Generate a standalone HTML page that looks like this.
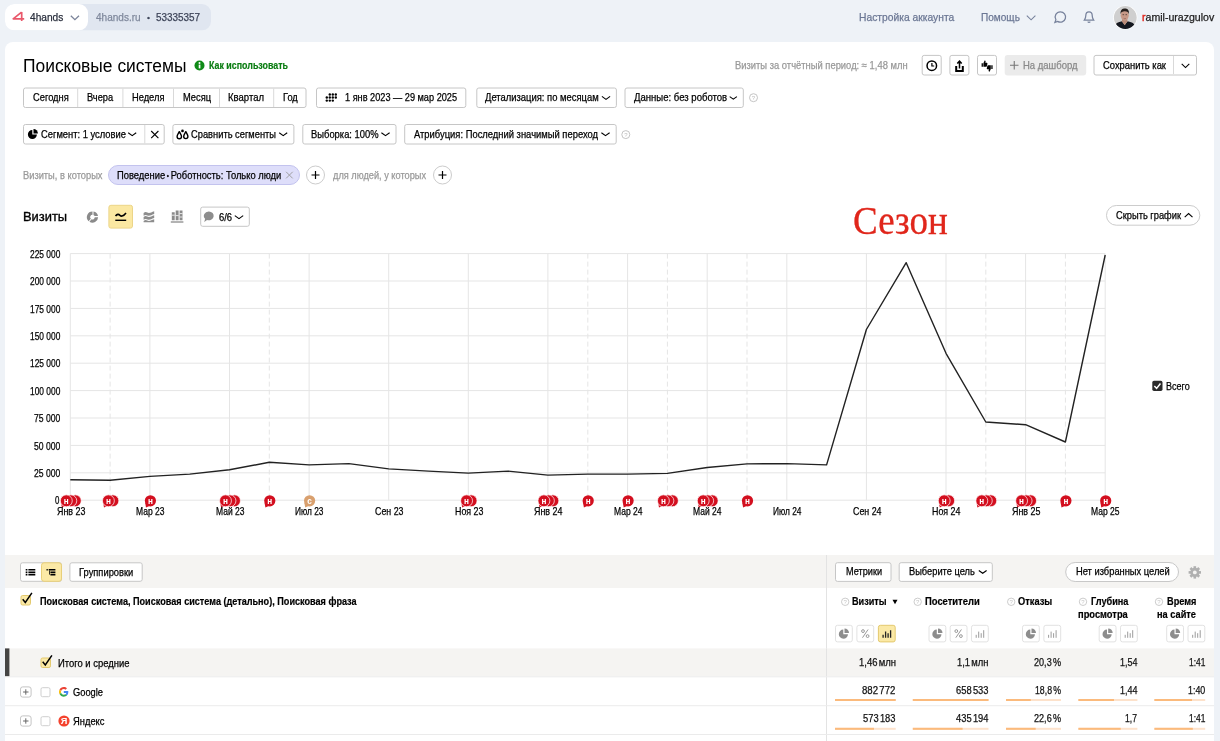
<!DOCTYPE html>
<html lang="ru">
<head>
<meta charset="utf-8">
<title>Поисковые системы — Яндекс Метрика</title>
<style>
html,body{margin:0;padding:0}
body{width:1220px;height:741px;overflow:hidden;background:#eef2f7;font-family:"Liberation Sans",sans-serif;position:relative}
.texts{position:absolute;left:0;top:0;width:1220px;height:741px;will-change:transform}
.t{position:absolute;white-space:pre;line-height:1;transform-origin:0 50%;display:block}
svg.gfx{position:absolute;left:0;top:0;will-change:transform}
</style>
</head>
<body>
<svg class="gfx" width="1220" height="741" viewBox="0 0 1220 741">
<rect x="5" y="4" width="206" height="26.3" rx="9" fill="#e0e6f0"/>
<rect x="5" y="4" width="83" height="26.3" rx="9" fill="#fff"/>
<svg x="12" y="11.5" overflow="visible" width="12.5" height="10" viewBox="0 0 12.5 10"><path d="M9.6 0.7 L1.2 7.3 H12.2 M9.7 0.4 V9.5" fill="none" stroke="#e9586b" stroke-width="1.7" stroke-linejoin="round"/></svg>
<svg x="70.3" y="15.2" overflow="visible" width="9.2" height="5" viewBox="0 0 9.2 5"><path d="M0.5 0.5 L4.6 4.4 L8.7 0.5" fill="none" stroke="#7b849a" stroke-width="1.3"/></svg>
<svg x="1026.3" y="15.2" overflow="visible" width="9.6" height="5.2" viewBox="0 0 9.6 5.2"><path d="M0.5 0.5 L4.8 4.6 L9.1 0.5" fill="none" stroke="#77829c" stroke-width="1.1"/></svg>
<svg x="1054" y="11" overflow="visible" width="12.5" height="12.5" viewBox="0 0 12.5 12.5"><path d="M6.4 0.8 A5.2 5.2 0 1 1 3.6 10.4 L0.9 11.4 L1.9 8.7 A5.2 5.2 0 0 1 6.4 0.8 Z" fill="none" stroke="#77829c" stroke-width="1.25"/></svg>
<svg x="1083.5" y="11" overflow="visible" width="11" height="12.5" viewBox="0 0 11 12.5"><path d="M5.5 0.8 C3.2 0.8 2.3 2.6 2.3 4.6 C2.3 7 1.6 7.9 0.8 9.2 H10.2 C9.4 7.9 8.7 7 8.7 4.6 C8.7 2.6 7.8 0.8 5.5 0.8 Z M4.2 10.6 Q5.5 12 6.8 10.6" fill="none" stroke="#77829c" stroke-width="1.25"/></svg>
<svg x="1113.2" y="5.4" overflow="visible" width="24.2" height="24.2" viewBox="0 0 24 24"><defs><clipPath id="av"><circle cx="12" cy="12" r="11.3"/></clipPath></defs><circle cx="12" cy="12" r="12" fill="#fff"/><g clip-path="url(#av)"><rect width="24" height="24" fill="#cfcfcf"/><path d="M0 24 C0.5 18.5 4 16.6 8.6 15.6 L11.4 19.5 L14.2 15.6 C19.5 16.6 22.5 18.5 23.5 24 Z" fill="#14171f"/><path d="M8.6 15.6 L11.4 19.6 L14.2 15.6 L13.8 13 H9 Z" fill="#b98a76"/><ellipse cx="11.4" cy="9.8" rx="4" ry="5.3" fill="#c79a88"/><path d="M7.3 8.8 C6.9 4.3 9.2 3.1 11.5 3.1 C13.900 3.100 16.100 4.300 15.600 8.800 C15.200 6.600 14 5.800 11.500 5.800 C9 5.800 7.800 6.600 7.300 8.800 Z" fill="#25201e"/><path d="M9.300 9.200 H10.800 M12.200 9.200 H13.700" stroke="#3a2a26" stroke-width="0.700"/><path d="M10.400 12.900 Q11.500 13.500 12.600 12.900" stroke="#8a5a50" stroke-width="0.600" fill="none"/></g></svg>
<rect x="5" y="42" width="1209" height="720" rx="8" fill="#fff"/>
<svg x="194.5" y="60.5" overflow="visible" width="10" height="10" viewBox="0 0 10 10"><circle cx="5" cy="5" r="5" fill="#0f8a17"/><rect x="4.2" y="4.1" width="1.7" height="3.8" fill="#fff"/><circle cx="5" cy="2.6" r="1" fill="#fff"/></svg>
<rect x="922.2" y="55.4" width="19" height="19.6" rx="2" fill="#fff" stroke="#c6c6c6"/>
<rect x="949.9" y="55.4" width="19" height="19.6" rx="2" fill="#fff" stroke="#c6c6c6"/>
<rect x="977.5" y="55.4" width="19" height="19.6" rx="2" fill="#fff" stroke="#c6c6c6"/>
<svg x="926.2" y="60.1" overflow="visible" width="11.2" height="11.2" viewBox="0 0 11.2 11.2"><circle cx="5.6" cy="5.6" r="4.75" fill="none" stroke="#000" stroke-width="1.5"/><path d="M5.7 2.9 V5.9 H8" fill="none" stroke="#000" stroke-width="1.2"/></svg>
<svg x="955.2" y="60.3" overflow="visible" width="8.6" height="11.8" viewBox="0 0 8.6 11.8"><path d="M4.3 8.2 V1.2 M2.1 3.3 L4.3 0.9 L6.5 3.3" fill="none" stroke="#000" stroke-width="1.5"/><path d="M1 5.6 V10.7 H7.6 V5.6" fill="none" stroke="#000" stroke-width="2"/></svg>
<svg x="981.4" y="60.2" overflow="visible" width="6.2" height="6.8" viewBox="0 0 6.2 6.8"><path d="M0.2 3 H1.5 V6.6 H0.2 Z M2 3 L3.2 0.2 Q4.5 0.2 4.2 1.6 L3.9 2.6 H5.5 Q6.3 2.8 6 3.700 L5.400 6.100 Q5.200 6.600 4.600 6.600 H2 Z" fill="#000"/></svg>
<svg x="986.6" y="65.1" overflow="visible" width="6.2" height="6.8" viewBox="0 0 6.2 6.8"><path d="M0.2 3 H1.5 V6.6 H0.2 Z M2 3 L3.2 0.2 Q4.5 0.2 4.2 1.6 L3.9 2.6 H5.5 Q6.3 2.8 6 3.700 L5.400 6.100 Q5.200 6.600 4.600 6.600 H2 Z" fill="#000" transform="rotate(180 3.1 3.4)"/></svg>
<rect x="1004.7" y="54.9" width="81.5" height="20.6" rx="3" fill="#ebebeb"/>
<svg x="1010" y="61" overflow="visible" width="8.5" height="8.5" viewBox="0 0 8.5 8.5"><path d="M4.25 0 V8.5 M0 4.25 H8.5" stroke="#777" stroke-width="1.1"/></svg>
<rect x="1094" y="55.4" width="102.5" height="19.6" rx="2" fill="#fff" stroke="#c6c6c6"/>
<rect x="1173" y="56" width="1" height="18" fill="#d9d9d9"/>
<svg x="1181.3" y="63.5" overflow="visible" width="8.4" height="4.8" viewBox="0 0 8.4 4.8"><path d="M0.4 0.4 L4.2 4.1 L8 0.4" fill="none" stroke="#000" stroke-width="1.1"/></svg>
<rect x="23.5" y="88" width="282.5" height="19.5" rx="2" fill="#fff" stroke="#c6c6c6"/>
<rect x="77.2" y="88.5" width="1" height="18.5" fill="#d9d9d9"/>
<rect x="122.4" y="88.5" width="1" height="18.5" fill="#d9d9d9"/>
<rect x="173" y="88.5" width="1" height="18.5" fill="#d9d9d9"/>
<rect x="219" y="88.5" width="1" height="18.5" fill="#d9d9d9"/>
<rect x="273.2" y="88.5" width="1" height="18.5" fill="#d9d9d9"/>
<rect x="316.5" y="88" width="149.3" height="19.5" rx="2" fill="#fff" stroke="#c6c6c6"/>
<svg x="325.5" y="93.2" overflow="visible" width="11.6" height="8.7" viewBox="0 0 11.6 8.7"><circle cx="4.3" cy="1.30" r="1.2" fill="#000"/><circle cx="7.3" cy="1.30" r="1.2" fill="#000"/><circle cx="10.3" cy="1.30" r="1.2" fill="#000"/><circle cx="1.3" cy="4.35" r="1.2" fill="#000"/><circle cx="4.3" cy="4.35" r="1.2" fill="#000"/><circle cx="7.3" cy="4.35" r="1.2" fill="#000"/><circle cx="10.3" cy="4.35" r="1.2" fill="#000"/><circle cx="1.3" cy="7.40" r="1.2" fill="#000"/><circle cx="4.3" cy="7.40" r="1.2" fill="#000"/><circle cx="7.3" cy="7.40" r="1.2" fill="#000"/></svg>
<rect x="476.8" y="88" width="139.6" height="19.5" rx="2" fill="#fff" stroke="#c6c6c6"/>
<svg x="601.5" y="96" overflow="visible" width="9.0" height="3.9" viewBox="0 0 9.0 3.9"><path d="M0.4 0.4 L4.50 3.37 L8.60 0.4" fill="none" stroke="#000" stroke-width="1.1"/></svg>
<rect x="625" y="88" width="118.3" height="19.5" rx="2" fill="#fff" stroke="#c6c6c6"/>
<svg x="729.3" y="96.2" overflow="visible" width="8.0" height="3.4" viewBox="0 0 8.0 3.4"><path d="M0.4 0.4 L4.00 2.94 L7.60 0.4" fill="none" stroke="#000" stroke-width="1.1"/></svg>
<svg x="749" y="93.2" overflow="visible" width="9.0" height="9.0" viewBox="0 0 9.0 9.0"><circle cx="4.5" cy="4.5" r="4.0" fill="none" stroke="#bdbdbd" stroke-width="0.9"/><text x="4.5" y="6.6" font-size="6" text-anchor="middle" fill="#bdbdbd" font-family="Liberation Sans, sans-serif">?</text></svg>
<rect x="23.5" y="124.5" width="140.7" height="19.5" rx="2" fill="#fff" stroke="#c6c6c6"/>
<rect x="144.3" y="125" width="1" height="18.5" fill="#d9d9d9"/>
<svg x="27.9" y="129" overflow="visible" width="10" height="10" viewBox="0 0 10 10"><path d="M4.4 1 A4.5 4.5 0 1 0 9 5.6 H4.4 Z" fill="#000"/><path d="M5.6 0 A4.4 4.4 0 0 1 10 4.4 H5.6 Z" fill="#000"/></svg>
<svg x="127.8" y="132.3" overflow="visible" width="8.8" height="3.8" viewBox="0 0 8.8 3.8"><path d="M0.4 0.4 L4.40 3.28 L8.40 0.4" fill="none" stroke="#000" stroke-width="1.1"/></svg>
<svg x="150.8" y="130.6" overflow="visible" width="8" height="8" viewBox="0 0 8 8"><path d="M0.4 0.4 L7.6 7.6 M7.6 0.4 L0.4 7.6" stroke="#000" stroke-width="1.1"/></svg>
<rect x="172.9" y="124.5" width="121" height="19.5" rx="2" fill="#fff" stroke="#c6c6c6"/>
<svg x="176.2" y="129.3" overflow="visible" width="12.6" height="10.4" viewBox="0 0 12.6 10.4"><path d="M3.1 2.4 C4.2 4.4 5.3 5.7 5.3 7.2 A2.2 2.2 0 0 1 0.9 7.2 C0.9 5.7 2 4.4 3.1 2.4 Z" fill="#fff" stroke="#000" stroke-width="1.4" stroke-linejoin="round"/><path d="M9.6 2.4 C10.7 4.4 11.7 5.700 11.7 7.2 A2.100 2.100 0 0 1 7.500 7.2 C7.500 5.700 8.500 4.400 9.600 2.400 Z" fill="#fff" stroke="#000" stroke-width="1.4" stroke-linejoin="round"/><circle cx="6.3" cy="1.6" r="1.35" fill="#000"/></svg>
<svg x="278.8" y="132.3" overflow="visible" width="8.8" height="3.8" viewBox="0 0 8.8 3.8"><path d="M0.4 0.4 L4.40 3.28 L8.40 0.4" fill="none" stroke="#000" stroke-width="1.1"/></svg>
<rect x="302.8" y="124.5" width="93.2" height="19.5" rx="2" fill="#fff" stroke="#c6c6c6"/>
<svg x="381" y="132.3" overflow="visible" width="9.0" height="3.9" viewBox="0 0 9.0 3.9"><path d="M0.4 0.4 L4.50 3.37 L8.60 0.4" fill="none" stroke="#000" stroke-width="1.1"/></svg>
<rect x="404.7" y="124.5" width="211.5" height="19.5" rx="2" fill="#fff" stroke="#c6c6c6"/>
<svg x="601" y="132.3" overflow="visible" width="9.0" height="3.9" viewBox="0 0 9.0 3.9"><path d="M0.4 0.4 L4.50 3.37 L8.60 0.4" fill="none" stroke="#000" stroke-width="1.1"/></svg>
<svg x="621.3" y="130.1" overflow="visible" width="9.0" height="9.0" viewBox="0 0 9.0 9.0"><circle cx="4.5" cy="4.5" r="4.0" fill="none" stroke="#bdbdbd" stroke-width="0.9"/><text x="4.5" y="6.6" font-size="6" text-anchor="middle" fill="#bdbdbd" font-family="Liberation Sans, sans-serif">?</text></svg>
<rect x="108.5" y="165.5" width="191" height="19" rx="9.5" fill="#dedefa" stroke="#c3c3ee"/>
<svg x="285.8" y="171.5" overflow="visible" width="7.2" height="7.2" viewBox="0 0 7.2 7.2"><path d="M0.3 0.3 L6.9 6.9 M6.9 0.3 L0.3 6.9" stroke="#999" stroke-width="0.9"/></svg>
<svg x="306" y="165.5" overflow="visible" width="19" height="19" viewBox="0 0 19 19"><circle cx="9.5" cy="9.5" r="9" fill="#fff" stroke="#ccc" stroke-width="1"/><path d="M9.5 5.5 V13.5 M5.5 9.5 H13.5" stroke="#000" stroke-width="1.2"/></svg>
<svg x="433" y="165.5" overflow="visible" width="19" height="19" viewBox="0 0 19 19"><circle cx="9.5" cy="9.5" r="9" fill="#fff" stroke="#ccc" stroke-width="1"/><path d="M9.5 5.5 V13.5 M5.5 9.5 H13.5" stroke="#000" stroke-width="1.2"/></svg>
<svg x="86.6" y="211.2" overflow="visible" width="11.8" height="11.800" viewBox="0 0 12 12"><path d="M6 0.300 A5.700 5.700 0 0 0 2 10.100 L4.300 7.700 A2.400 2.400 0 0 1 6 3.600 Z" fill="#8a8a8a"/><path d="M7 0.400 A5.700 5.700 0 0 1 11.600 5 H8.200 A2.400 2.400 0 0 0 7 3.800 Z" fill="#8a8a8a"/><path d="M11.700 6.200 A5.700 5.700 0 0 1 2.900 10.800 L5 8.300 A2.400 2.400 0 0 0 8.300 6.200 Z" fill="#8a8a8a"/></svg>
<rect x="108.9" y="205.3" width="23.6" height="22.8" rx="2" fill="#fbe8a2" stroke="#ecd588"/>
<svg x="115" y="211.5" overflow="visible" width="11.5" height="10" viewBox="0 0 11.5 10"><path d="M0.5 4.6 C2.2 2.4 3.6 2.4 5 3.9 C6.5 5.4 8.6 4.4 11 1.4" fill="none" stroke="#000" stroke-width="1.6"/><path d="M0.3 8.8 H11.2" stroke="#000" stroke-width="1.4"/></svg>
<svg x="143.6" y="211.3" overflow="visible" width="10.6" height="11" viewBox="0 0 10.6 11"><path d="M0 1.8 C2.4 -0.4 3.6 1.8 5.3 1.8 C7 1.8 8.2 0.6 10.6 0 V2.6 C8.2 3.2 7 4.4 5.3 4.4 C3.6 4.4 2.4 2.6 0 4.4 Z M0 5.8 C2.4 3.6 3.6 5.8 5.3 5.8 C7 5.8 8.2 4.6 10.6 4 V6.6 C8.2 7.2 7 8.4 5.3 8.4 C3.6 8.4 2.4 6.6 0 8.4 Z M0 9.6 C2.4 7.6 3.6 9.6 5.3 9.6 C7 9.6 8.2 8.6 10.6 8 V11 H0 Z" fill="#8d8d8d"/></svg>
<svg x="170.8" y="210.4" overflow="visible" width="12.6" height="12.4" viewBox="0 0 12.6 12.4"><path d="M1 1.800 H3.900 V9.800 H1 Z M4.900 0 H7.800 V9.800 H4.900 Z M8.800 0 H11.700 V9.800 H8.800 Z" fill="#8a8a8a"/><path d="M4.900 5.200 H7.800 M8.800 3.200 H11.700 M8.800 6.600 H11.700 M1 4.800 H3.900" stroke="#fff" stroke-width="0.800"/><path d="M0 11.600 H12.600" stroke="#8a8a8a" stroke-width="1.300"/></svg>
<rect x="200.7" y="207.1" width="48.6" height="19.2" rx="2" fill="#fff" stroke="#c6c6c6"/>
<svg x="203.4" y="211.2" overflow="visible" width="10.6" height="11.1" viewBox="0 0 10 10.5"><path d="M5.2 0.2 A4.6 4.2 0 1 1 3.4 8.3 L0.8 10.2 L1.6 7.2 A4.6 4.2 0 0 1 5.2 0.2 Z" fill="#8d8d8d"/></svg>
<svg x="234.4" y="215.2" overflow="visible" width="9.2" height="4.0" viewBox="0 0 9.2 4.0"><path d="M0.4 0.4 L4.60 3.46 L8.80 0.4" fill="none" stroke="#000" stroke-width="1.1"/></svg>
<rect x="1106.5" y="205.5" width="93.3" height="19.7" rx="9.8" fill="#fff" stroke="#ccc"/>
<svg x="1184.3" y="213" overflow="visible" width="8.6" height="4.6" viewBox="0 0 8.6 4.6"><path d="M0.4 4.2 L4.3 0.6 L8.2 4.2" fill="none" stroke="#000" stroke-width="1.1"/></svg>
<svg x="0" y="0" overflow="visible" width="1220" height="741" viewBox="0 0 1220 741"><path d="M70.3 500.2 H1105.2" stroke="#e5e5e5" stroke-width="1"/><path d="M70.3 472.8 H1105.2" stroke="#e5e5e5" stroke-width="1"/><path d="M70.3 445.4 H1105.2" stroke="#e5e5e5" stroke-width="1"/><path d="M70.3 418.0 H1105.2" stroke="#e5e5e5" stroke-width="1"/><path d="M70.3 390.6 H1105.2" stroke="#e5e5e5" stroke-width="1"/><path d="M70.3 363.2 H1105.2" stroke="#e5e5e5" stroke-width="1"/><path d="M70.3 335.8 H1105.2" stroke="#e5e5e5" stroke-width="1"/><path d="M70.3 308.4 H1105.2" stroke="#e5e5e5" stroke-width="1"/><path d="M70.3 281.0 H1105.2" stroke="#e5e5e5" stroke-width="1"/><path d="M70.3 253.6 H1105.2" stroke="#e5e5e5" stroke-width="1"/><path d="M70.3 253.6 V500.2" stroke="#e5e5e5" stroke-width="1"/><path d="M149.9 253.6 V500.2" stroke="#e5e5e5" stroke-width="1"/><path d="M229.5 253.6 V500.2" stroke="#e5e5e5" stroke-width="1"/><path d="M309.1 253.6 V500.2" stroke="#e5e5e5" stroke-width="1"/><path d="M388.7 253.6 V500.2" stroke="#e5e5e5" stroke-width="1"/><path d="M468.3 253.6 V500.2" stroke="#e5e5e5" stroke-width="1"/><path d="M547.9 253.6 V500.2" stroke="#e5e5e5" stroke-width="1"/><path d="M627.6 253.6 V500.2" stroke="#e5e5e5" stroke-width="1"/><path d="M707.2 253.6 V500.2" stroke="#e5e5e5" stroke-width="1"/><path d="M786.8 253.6 V500.2" stroke="#e5e5e5" stroke-width="1"/><path d="M866.4 253.6 V500.2" stroke="#e5e5e5" stroke-width="1"/><path d="M946.0 253.6 V500.2" stroke="#e5e5e5" stroke-width="1"/><path d="M1025.6 253.6 V500.2" stroke="#e5e5e5" stroke-width="1"/><path d="M1105.2 253.6 V500.2" stroke="#e5e5e5" stroke-width="1"/><path d="M110.1 253.6 V500.2" stroke="#e5e5e5" stroke-width="1" stroke-dasharray="5 3"/><path d="M269.3 253.6 V500.2" stroke="#e5e5e5" stroke-width="1" stroke-dasharray="5 3"/><path d="M587.8 253.6 V500.2" stroke="#e5e5e5" stroke-width="1" stroke-dasharray="5 3"/><path d="M667.4 253.6 V500.2" stroke="#e5e5e5" stroke-width="1" stroke-dasharray="5 3"/><path d="M747.0 253.6 V500.2" stroke="#e5e5e5" stroke-width="1" stroke-dasharray="5 3"/><path d="M985.8 253.6 V500.2" stroke="#e5e5e5" stroke-width="1" stroke-dasharray="5 3"/><path d="M1065.4 253.6 V500.2" stroke="#e5e5e5" stroke-width="1" stroke-dasharray="5 3"/><polyline points="70.3,479.7 110.1,480.3 149.9,476.4 189.7,474.1 229.5,469.8 269.3,462.3 309.1,464.9 348.9,463.6 388.7,468.9 428.5,471.1 468.3,473.1 508.1,471.1 547.9,475.1 587.8,474.1 627.6,474.1 667.4,473.4 707.2,467.5 747.0,463.9 786.8,463.6 826.6,464.9 866.4,329.5 906.2,262.7 946.0,353.3 985.8,422 1025.6,424.7 1065.4,442 1105.2,255" fill="none" stroke="#222" stroke-width="1.4" stroke-linejoin="round"/><circle cx="75.3" cy="500.8" r="5.949999999999999" fill="#d30f1f" stroke="#fff" stroke-width="0.7"/><circle cx="70.8" cy="500.8" r="5.949999999999999" fill="#d30f1f" stroke="#fff" stroke-width="0.7"/><path d="M61.0 502.40000000000003 L61.9 507.5 L65.3 506.1" fill="#d30f1f"/><circle cx="66.3" cy="500.8" r="5.949999999999999" fill="#d30f1f" stroke="#fff" stroke-width="0.7"/><text x="66.3" y="503.5" font-size="8.2" font-weight="700" text-anchor="middle" fill="#fff" font-family="Liberation Sans, sans-serif">н</text><circle cx="112.9" cy="500.8" r="5.949999999999999" fill="#d30f1f" stroke="#fff" stroke-width="0.7"/><path d="M103.1 502.40000000000003 L104.0 507.5 L107.4 506.1" fill="#d30f1f"/><circle cx="108.4" cy="500.8" r="5.949999999999999" fill="#d30f1f" stroke="#fff" stroke-width="0.7"/><text x="108.4" y="503.5" font-size="8.2" font-weight="700" text-anchor="middle" fill="#fff" font-family="Liberation Sans, sans-serif">н</text><path d="M145.1 502.40000000000003 L146.0 507.5 L149.4 506.1" fill="#d30f1f"/><circle cx="150.4" cy="500.8" r="5.6" fill="#d30f1f"/><text x="150.4" y="503.5" font-size="8.2" font-weight="700" text-anchor="middle" fill="#fff" font-family="Liberation Sans, sans-serif">н</text><circle cx="234.5" cy="500.8" r="5.949999999999999" fill="#d30f1f" stroke="#fff" stroke-width="0.7"/><circle cx="230.0" cy="500.8" r="5.949999999999999" fill="#d30f1f" stroke="#fff" stroke-width="0.7"/><path d="M220.2 502.40000000000003 L221.1 507.5 L224.5 506.1" fill="#d30f1f"/><circle cx="225.5" cy="500.8" r="5.949999999999999" fill="#d30f1f" stroke="#fff" stroke-width="0.7"/><text x="225.5" y="503.5" font-size="8.2" font-weight="700" text-anchor="middle" fill="#fff" font-family="Liberation Sans, sans-serif">н</text><path d="M264.5 502.40000000000003 L265.4 507.5 L268.8 506.1" fill="#d30f1f"/><circle cx="269.8" cy="500.8" r="5.6" fill="#d30f1f"/><text x="269.8" y="503.5" font-size="8.2" font-weight="700" text-anchor="middle" fill="#fff" font-family="Liberation Sans, sans-serif">н</text><circle cx="471.1" cy="500.8" r="5.949999999999999" fill="#d30f1f" stroke="#fff" stroke-width="0.7"/><path d="M461.3 502.40000000000003 L462.2 507.5 L465.6 506.1" fill="#d30f1f"/><circle cx="466.6" cy="500.8" r="5.949999999999999" fill="#d30f1f" stroke="#fff" stroke-width="0.7"/><text x="466.6" y="503.5" font-size="8.2" font-weight="700" text-anchor="middle" fill="#fff" font-family="Liberation Sans, sans-serif">н</text><circle cx="552.9" cy="500.8" r="5.949999999999999" fill="#d30f1f" stroke="#fff" stroke-width="0.7"/><circle cx="548.4" cy="500.8" r="5.949999999999999" fill="#d30f1f" stroke="#fff" stroke-width="0.7"/><path d="M538.6 502.40000000000003 L539.5 507.5 L542.9 506.1" fill="#d30f1f"/><circle cx="543.9" cy="500.8" r="5.949999999999999" fill="#d30f1f" stroke="#fff" stroke-width="0.7"/><text x="543.9" y="503.5" font-size="8.2" font-weight="700" text-anchor="middle" fill="#fff" font-family="Liberation Sans, sans-serif">н</text><path d="M583.0 502.40000000000003 L583.9 507.5 L587.2 506.1" fill="#d30f1f"/><circle cx="588.2" cy="500.8" r="5.6" fill="#d30f1f"/><text x="588.2" y="503.5" font-size="8.2" font-weight="700" text-anchor="middle" fill="#fff" font-family="Liberation Sans, sans-serif">н</text><path d="M622.8 502.40000000000003 L623.7 507.5 L627.1 506.1" fill="#d30f1f"/><circle cx="628.1" cy="500.8" r="5.6" fill="#d30f1f"/><text x="628.1" y="503.5" font-size="8.2" font-weight="700" text-anchor="middle" fill="#fff" font-family="Liberation Sans, sans-serif">н</text><circle cx="672.4" cy="500.8" r="5.949999999999999" fill="#d30f1f" stroke="#fff" stroke-width="0.7"/><circle cx="667.9" cy="500.8" r="5.949999999999999" fill="#d30f1f" stroke="#fff" stroke-width="0.7"/><path d="M658.1 502.40000000000003 L659.0 507.5 L662.4 506.1" fill="#d30f1f"/><circle cx="663.4" cy="500.8" r="5.949999999999999" fill="#d30f1f" stroke="#fff" stroke-width="0.7"/><text x="663.4" y="503.5" font-size="8.2" font-weight="700" text-anchor="middle" fill="#fff" font-family="Liberation Sans, sans-serif">н</text><circle cx="712.2" cy="500.8" r="5.949999999999999" fill="#d30f1f" stroke="#fff" stroke-width="0.7"/><circle cx="707.7" cy="500.8" r="5.949999999999999" fill="#d30f1f" stroke="#fff" stroke-width="0.7"/><path d="M697.9 502.40000000000003 L698.8 507.5 L702.2 506.1" fill="#d30f1f"/><circle cx="703.2" cy="500.8" r="5.949999999999999" fill="#d30f1f" stroke="#fff" stroke-width="0.7"/><text x="703.2" y="503.5" font-size="8.2" font-weight="700" text-anchor="middle" fill="#fff" font-family="Liberation Sans, sans-serif">н</text><path d="M742.2 502.40000000000003 L743.1 507.5 L746.5 506.1" fill="#d30f1f"/><circle cx="747.5" cy="500.8" r="5.6" fill="#d30f1f"/><text x="747.5" y="503.5" font-size="8.2" font-weight="700" text-anchor="middle" fill="#fff" font-family="Liberation Sans, sans-serif">н</text><circle cx="948.7" cy="500.8" r="5.949999999999999" fill="#d30f1f" stroke="#fff" stroke-width="0.7"/><path d="M938.9 502.40000000000003 L939.8 507.5 L943.2 506.1" fill="#d30f1f"/><circle cx="944.2" cy="500.8" r="5.949999999999999" fill="#d30f1f" stroke="#fff" stroke-width="0.7"/><text x="944.2" y="503.5" font-size="8.2" font-weight="700" text-anchor="middle" fill="#fff" font-family="Liberation Sans, sans-serif">н</text><circle cx="990.8" cy="500.8" r="5.949999999999999" fill="#d30f1f" stroke="#fff" stroke-width="0.7"/><circle cx="986.3" cy="500.8" r="5.949999999999999" fill="#d30f1f" stroke="#fff" stroke-width="0.7"/><path d="M976.5 502.40000000000003 L977.4 507.5 L980.8 506.1" fill="#d30f1f"/><circle cx="981.8" cy="500.8" r="5.949999999999999" fill="#d30f1f" stroke="#fff" stroke-width="0.7"/><text x="981.8" y="503.5" font-size="8.2" font-weight="700" text-anchor="middle" fill="#fff" font-family="Liberation Sans, sans-serif">н</text><circle cx="1030.6" cy="500.8" r="5.949999999999999" fill="#d30f1f" stroke="#fff" stroke-width="0.7"/><circle cx="1026.1" cy="500.8" r="5.949999999999999" fill="#d30f1f" stroke="#fff" stroke-width="0.7"/><path d="M1016.3 502.40000000000003 L1017.2 507.5 L1020.6 506.1" fill="#d30f1f"/><circle cx="1021.6" cy="500.8" r="5.949999999999999" fill="#d30f1f" stroke="#fff" stroke-width="0.7"/><text x="1021.6" y="503.5" font-size="8.2" font-weight="700" text-anchor="middle" fill="#fff" font-family="Liberation Sans, sans-serif">н</text><path d="M1060.6 502.40000000000003 L1061.5 507.5 L1064.9 506.1" fill="#d30f1f"/><circle cx="1065.9" cy="500.8" r="5.6" fill="#d30f1f"/><text x="1065.9" y="503.5" font-size="8.2" font-weight="700" text-anchor="middle" fill="#fff" font-family="Liberation Sans, sans-serif">н</text><path d="M1100.4 502.40000000000003 L1101.3 507.5 L1104.7 506.1" fill="#d30f1f"/><circle cx="1105.7" cy="500.8" r="5.6" fill="#d30f1f"/><text x="1105.7" y="503.5" font-size="8.2" font-weight="700" text-anchor="middle" fill="#fff" font-family="Liberation Sans, sans-serif">н</text><path d="M304.3 502.40000000000003 L305.2 507.5 L308.6 506.1" fill="#d9a06e"/><circle cx="309.6" cy="500.8" r="5.6" fill="#d9a06e"/><text x="309.6" y="503.5" font-size="8.2" font-weight="700" text-anchor="middle" fill="#fff" font-family="Liberation Sans, sans-serif">с</text></svg>
<svg x="1152.3" y="380.8" overflow="visible" width="10.2" height="10.2" viewBox="0 0 10 10"><rect x="0" y="0" width="10" height="10" rx="1.6" fill="#2b2b2b"/><path d="M2 5.2 L4.2 7.4 L8 2.6" fill="none" stroke="#fff" stroke-width="1.4"/></svg>
<rect x="5" y="555" width="1209" height="33" fill="#f5f4f2"/>
<rect x="826" y="555" width="1" height="190" fill="#e3e3e3"/>
<rect x="20.5" y="562.8" width="41" height="18.5" rx="2" fill="#fff" stroke="#c6c6c6"/>
<rect x="41.5" y="562.8" width="20" height="18.5" rx="2.5" fill="#fbe9a6" stroke="#e8cf78"/>
<svg x="25.7" y="569" overflow="visible" width="9.6" height="6.4" viewBox="0 0 9.6 6.4"><path d="M0 0.8 H1.7 M0 3.2 H1.7 M0 5.6 H1.7 M2.7 0.8 H9.6 M2.700 3.200 H9.600 M2.700 5.600 H9.600" stroke="#000" stroke-width="1.600"/></svg>
<svg x="46.5" y="569" overflow="visible" width="8.900" height="6.400" viewBox="0 0 8.900 6.400"><path d="M0 0.800 H1.300 M2.200 0.800 H8.900 M3.900 3.200 H8.900 M3.900 5.600 H8.900" stroke="#000" stroke-width="1.600"/><path d="M3 1.500 V5.600" stroke="#000" stroke-width="0.800"/></svg>
<rect x="69.9" y="562.8" width="72.3" height="18.5" rx="2" fill="#fff" stroke="#c6c6c6"/>
<rect x="835.5" y="562.7" width="55.5" height="18.7" rx="2" fill="#fff" stroke="#c6c6c6"/>
<rect x="899.2" y="562.7" width="93.1" height="18.7" rx="2" fill="#fff" stroke="#c6c6c6"/>
<svg x="978.4" y="570.1" overflow="visible" width="8.6" height="3.7" viewBox="0 0 8.6 3.7"><path d="M0.4 0.4 L4.30 3.20 L8.20 0.4" fill="none" stroke="#000" stroke-width="1.1"/></svg>
<rect x="1065.7" y="562.5" width="112.8" height="19" rx="9.5" fill="#fff" stroke="#c8c8c8"/>
<svg x="1188.6" y="566.2" overflow="visible" width="12.4" height="12.4" viewBox="-6.2 -6.2 12.4 12.4"><rect x="-1.3" y="-6.2" width="2.6" height="3" fill="#b0b0b0" transform="rotate(0)"/><rect x="-1.3" y="-6.2" width="2.6" height="3" fill="#b0b0b0" transform="rotate(45)"/><rect x="-1.3" y="-6.2" width="2.6" height="3" fill="#b0b0b0" transform="rotate(90)"/><rect x="-1.3" y="-6.2" width="2.6" height="3" fill="#b0b0b0" transform="rotate(135)"/><rect x="-1.3" y="-6.2" width="2.6" height="3" fill="#b0b0b0" transform="rotate(180)"/><rect x="-1.3" y="-6.2" width="2.6" height="3" fill="#b0b0b0" transform="rotate(225)"/><rect x="-1.3" y="-6.2" width="2.6" height="3" fill="#b0b0b0" transform="rotate(270)"/><rect x="-1.3" y="-6.2" width="2.6" height="3" fill="#b0b0b0" transform="rotate(315)"/><circle r="4.6" fill="#b0b0b0"/><circle r="1.9" fill="#f5f4f2"/></svg>
<svg x="20.5" y="592" overflow="visible" width="14" height="13.5" viewBox="0 0 14 13.5"><rect x="0.5" y="3.5" width="9.5" height="9.5" rx="1.6" fill="#fbe9a6" stroke="#e3c96e" stroke-width="1"/><path d="M2.2 7.2 L4.8 10.4 L11.4 0.8" fill="none" stroke="#000" stroke-width="1.5"/></svg>
<svg x="841" y="597.6" overflow="visible" width="8.4" height="8.4" viewBox="0 0 8.4 8.4"><circle cx="4.2" cy="4.2" r="3.7" fill="none" stroke="#c6c6c6" stroke-width="0.9"/><text x="4.2" y="6.300000000000001" font-size="6" text-anchor="middle" fill="#c6c6c6" font-family="Liberation Sans, sans-serif">?</text></svg>
<svg x="892.5" y="599.8" overflow="visible" width="5" height="4.4" viewBox="0 0 5 4.4"><path d="M0 0 H5 L2.5 4.4 Z" fill="#000"/></svg>
<svg x="913.5" y="597.6" overflow="visible" width="8.4" height="8.4" viewBox="0 0 8.4 8.4"><circle cx="4.2" cy="4.2" r="3.7" fill="none" stroke="#c6c6c6" stroke-width="0.9"/><text x="4.2" y="6.300000000000001" font-size="6" text-anchor="middle" fill="#c6c6c6" font-family="Liberation Sans, sans-serif">?</text></svg>
<svg x="1007" y="597.6" overflow="visible" width="8.4" height="8.4" viewBox="0 0 8.4 8.4"><circle cx="4.2" cy="4.2" r="3.7" fill="none" stroke="#c6c6c6" stroke-width="0.9"/><text x="4.2" y="6.300000000000001" font-size="6" text-anchor="middle" fill="#c6c6c6" font-family="Liberation Sans, sans-serif">?</text></svg>
<svg x="1078.8" y="597.6" overflow="visible" width="8.4" height="8.4" viewBox="0 0 8.4 8.4"><circle cx="4.2" cy="4.2" r="3.7" fill="none" stroke="#c6c6c6" stroke-width="0.9"/><text x="4.2" y="6.300000000000001" font-size="6" text-anchor="middle" fill="#c6c6c6" font-family="Liberation Sans, sans-serif">?</text></svg>
<svg x="1154.8" y="597.6" overflow="visible" width="8.4" height="8.4" viewBox="0 0 8.4 8.4"><circle cx="4.2" cy="4.2" r="3.7" fill="none" stroke="#c6c6c6" stroke-width="0.9"/><text x="4.2" y="6.300000000000001" font-size="6" text-anchor="middle" fill="#c6c6c6" font-family="Liberation Sans, sans-serif">?</text></svg>
<rect x="835.5" y="625.3" width="16.8" height="16.6" rx="2" fill="#fff" stroke="#e2e2e2"/><svg x="838.8" y="628.5" overflow="visible" width="10.2" height="10.2" viewBox="0 0 10 10"><path d="M4.4 1 A4.5 4.5 0 1 0 9 5.6 H4.4 Z" fill="#8d8d8d"/><path d="M5.6 0 A4.4 4.4 0 0 1 10 4.4 H5.6 Z" fill="#8d8d8d"/></svg><rect x="856.9" y="625.3" width="16.8" height="16.6" rx="2" fill="#fff" stroke="#e2e2e2"/><svg x="861.1" y="629.1" overflow="visible" width="8.4" height="9" viewBox="0 0 8.4 9"><circle cx="1.9" cy="2" r="1.4" fill="none" stroke="#8d8d8d" stroke-width="0.9"/><circle cx="6.5" cy="7" r="1.4" fill="none" stroke="#8d8d8d" stroke-width="0.9"/><path d="M7 0.4 L1.4 8.6" stroke="#8d8d8d" stroke-width="0.9"/></svg><rect x="878.4" y="625.3" width="16.8" height="16.6" rx="2" fill="#fbe9a6" stroke="#e3c96e"/><svg x="882.3" y="629.8" overflow="visible" width="9" height="8" viewBox="0 0 9 8"><path d="M0.8 8 V5 M3.3 8 V1.8 M5.8 8 V3.4 M8.3 8 V0.4" stroke="#222" stroke-width="1.3"/></svg>
<rect x="929" y="625.3" width="16.8" height="16.6" rx="2" fill="#fff" stroke="#e2e2e2"/><svg x="932.3" y="628.5" overflow="visible" width="10.2" height="10.2" viewBox="0 0 10 10"><path d="M4.4 1 A4.5 4.5 0 1 0 9 5.6 H4.4 Z" fill="#8d8d8d"/><path d="M5.6 0 A4.4 4.4 0 0 1 10 4.4 H5.6 Z" fill="#8d8d8d"/></svg><rect x="950.2" y="625.3" width="16.8" height="16.6" rx="2" fill="#fff" stroke="#e2e2e2"/><svg x="954.4" y="629.1" overflow="visible" width="8.4" height="9" viewBox="0 0 8.4 9"><circle cx="1.9" cy="2" r="1.4" fill="none" stroke="#8d8d8d" stroke-width="0.9"/><circle cx="6.5" cy="7" r="1.4" fill="none" stroke="#8d8d8d" stroke-width="0.9"/><path d="M7 0.4 L1.4 8.6" stroke="#8d8d8d" stroke-width="0.9"/></svg><rect x="971.5" y="625.3" width="16.8" height="16.6" rx="2" fill="#fff" stroke="#e2e2e2"/><svg x="975.4" y="629.8" overflow="visible" width="9" height="8" viewBox="0 0 9 8"><path d="M0.8 8 V5 M3.3 8 V1.8 M5.8 8 V3.4 M8.3 8 V0.4" stroke="#9c9c9c" stroke-width="1"/></svg>
<rect x="1022.5" y="625.3" width="16.8" height="16.6" rx="2" fill="#fff" stroke="#e2e2e2"/><svg x="1025.8" y="628.5" overflow="visible" width="10.2" height="10.2" viewBox="0 0 10 10"><path d="M4.4 1 A4.5 4.5 0 1 0 9 5.6 H4.4 Z" fill="#8d8d8d"/><path d="M5.6 0 A4.4 4.4 0 0 1 10 4.4 H5.6 Z" fill="#8d8d8d"/></svg><rect x="1043.9" y="625.3" width="16.8" height="16.6" rx="2" fill="#fff" stroke="#e2e2e2"/><svg x="1047.8" y="629.8" overflow="visible" width="9" height="8" viewBox="0 0 9 8"><path d="M0.8 8 V5 M3.3 8 V1.8 M5.8 8 V3.4 M8.3 8 V0.4" stroke="#9c9c9c" stroke-width="1"/></svg>
<rect x="1099.2" y="625.3" width="16.8" height="16.6" rx="2" fill="#fff" stroke="#e2e2e2"/><svg x="1102.5" y="628.5" overflow="visible" width="10.2" height="10.2" viewBox="0 0 10 10"><path d="M4.4 1 A4.5 4.5 0 1 0 9 5.6 H4.4 Z" fill="#8d8d8d"/><path d="M5.6 0 A4.4 4.4 0 0 1 10 4.4 H5.6 Z" fill="#8d8d8d"/></svg><rect x="1120.5" y="625.3" width="16.8" height="16.6" rx="2" fill="#fff" stroke="#e2e2e2"/><svg x="1124.4" y="629.8" overflow="visible" width="9" height="8" viewBox="0 0 9 8"><path d="M0.8 8 V5 M3.3 8 V1.8 M5.8 8 V3.4 M8.3 8 V0.4" stroke="#9c9c9c" stroke-width="1"/></svg>
<rect x="1166.7" y="625.3" width="16.8" height="16.6" rx="2" fill="#fff" stroke="#e2e2e2"/><svg x="1170" y="628.5" overflow="visible" width="10.2" height="10.2" viewBox="0 0 10 10"><path d="M4.4 1 A4.5 4.5 0 1 0 9 5.6 H4.4 Z" fill="#8d8d8d"/><path d="M5.6 0 A4.4 4.4 0 0 1 10 4.4 H5.6 Z" fill="#8d8d8d"/></svg><rect x="1188" y="625.3" width="16.8" height="16.6" rx="2" fill="#fff" stroke="#e2e2e2"/><svg x="1191.9" y="629.8" overflow="visible" width="9" height="8" viewBox="0 0 9 8"><path d="M0.8 8 V5 M3.3 8 V1.8 M5.8 8 V3.4 M8.3 8 V0.4" stroke="#9c9c9c" stroke-width="1"/></svg>
<rect x="5" y="648.4" width="1209" height="28" fill="#f5f4f2"/>
<rect x="826" y="648.4" width="1" height="28" fill="#e3e3e3"/>
<rect x="5" y="648.4" width="4.4" height="28" fill="#444"/>
<rect x="5" y="676.3" width="1209" height="1" fill="#ebebeb"/>
<rect x="5" y="705.2" width="1209" height="1" fill="#ebebeb"/>
<rect x="5" y="734" width="1209" height="1" fill="#ebebeb"/>
<svg x="40.5" y="654.5" overflow="visible" width="14" height="13.5" viewBox="0 0 14 13.5"><rect x="0.5" y="3.5" width="9.5" height="9.5" rx="1.6" fill="#fbe9a6" stroke="#e3c96e" stroke-width="1"/><path d="M2.2 7.2 L4.8 10.4 L11.4 0.8" fill="none" stroke="#000" stroke-width="1.5"/></svg>
<svg x="20" y="686.4" overflow="visible" width="11.6" height="11.2" viewBox="0 0 11.6 11.2"><rect x="0.5" y="0.5" width="10.6" height="10.2" rx="2.2" fill="#fff" stroke="#c4c4c4"/><path d="M5.8 2.9 V8.3 M3.1 5.6 H8.5" stroke="#666" stroke-width="1"/></svg><rect x="41" y="687.7" width="9" height="9" rx="1.5" fill="#fff" stroke="#cfcfcf"/>
<svg x="59" y="687" overflow="visible" width="9.6" height="9.8" viewBox="0 0 48 48"><path fill="#EA4335" d="M24 9.5c3.5 0 6.6 1.2 9.1 3.6l6.8-6.8C35.8 2.4 30.3 0 24 0 14.6 0 6.5 5.4 2.6 13.2l7.9 6.2C12.400 13.700 17.700 9.500 24 9.500z"/><path fill="#4285F4" d="M46.500 24.500c0-1.600-.1-3.100-.4-4.500H24v9h12.700c-.6 3-2.300 5.500-4.800 7.200l7.700 6c4.500-4.200 6.900-10.300 6.900-17.700z"/><path fill="#FBBC05" d="M10.500 28.600c-.5-1.400-.8-3-.8-4.600s.3-3.200.8-4.600l-7.900-6.200C.9 16.500 0 20.100 0 24s.9 7.500 2.600 10.800l7.900-6.200z"/><path fill="#34A853" d="M24 48c6.500 0 11.900-2.100 15.900-5.800l-7.700-6c-2.100 1.400-4.900 2.300-8.200 2.300-6.300 0-11.600-4.200-13.500-9.900l-7.900 6.200C6.500 42.600 14.600 48 24 48z"/></svg>
<svg x="20" y="715.4" overflow="visible" width="11.6" height="11.2" viewBox="0 0 11.6 11.2"><rect x="0.5" y="0.5" width="10.6" height="10.2" rx="2.2" fill="#fff" stroke="#c4c4c4"/><path d="M5.8 2.9 V8.3 M3.1 5.6 H8.5" stroke="#666" stroke-width="1"/></svg><rect x="41" y="716.7" width="9" height="9" rx="1.5" fill="#fff" stroke="#cfcfcf"/>
<svg x="58.5" y="715.5" overflow="visible" width="11" height="11" viewBox="0 0 11 11"><circle cx="5.500" cy="5.500" r="5.600" fill="#f4432e"/><text x="5.500" y="8.800" font-size="9.2" font-weight="700" text-anchor="middle" fill="#fff" font-family="Liberation Sans, sans-serif">Я</text></svg>
<rect x="835" y="699" width="60.7" height="2" fill="#fde2cb"/>
<rect x="835" y="699" width="60.7" height="2" fill="#fbba7c"/>
<rect x="912.8" y="699" width="75.7" height="2" fill="#fde2cb"/>
<rect x="912.8" y="699" width="75.7" height="2" fill="#fbba7c"/>
<rect x="1006" y="699" width="55" height="2" fill="#fde2cb"/>
<rect x="1006" y="699" width="24.8" height="2" fill="#fbba7c"/>
<rect x="1078.4" y="699" width="59" height="2" fill="#fde2cb"/>
<rect x="1078.4" y="699" width="35.6" height="2" fill="#fbba7c"/>
<rect x="1154.4" y="699" width="50.8" height="2" fill="#fde2cb"/>
<rect x="1154.4" y="699" width="37.6" height="2" fill="#fbba7c"/>
<rect x="835" y="727.8" width="60.7" height="2" fill="#fde2cb"/>
<rect x="835" y="727.8" width="39" height="2" fill="#fbba7c"/>
<rect x="912.8" y="727.8" width="75.7" height="2" fill="#fde2cb"/>
<rect x="912.8" y="727.8" width="49.8" height="2" fill="#fbba7c"/>
<rect x="1006" y="727.8" width="55" height="2" fill="#fde2cb"/>
<rect x="1006" y="727.8" width="29.7" height="2" fill="#fbba7c"/>
<rect x="1078.4" y="727.8" width="59" height="2" fill="#fde2cb"/>
<rect x="1078.4" y="727.8" width="42.3" height="2" fill="#fbba7c"/>
<rect x="1154.4" y="727.8" width="50.8" height="2" fill="#fde2cb"/>
<rect x="1154.4" y="727.8" width="38.4" height="2" fill="#fbba7c"/>
</svg>
<div class="texts">
<span class="t" style="left:29.8px;top:11.8px;font-size:11px;color:#2a2f3d;-webkit-text-stroke:0.25px;transform:scaleX(0.923)">4hands</span>
<span class="t" style="left:95.6px;top:11.8px;font-size:11px;color:#7f889c;-webkit-text-stroke:0.25px;transform:scaleX(0.913)">4hands.ru</span>
<span class="t" style="left:146.5px;top:13.8px;font-size:8px;color:#3d4458;-webkit-text-stroke:0.25px;transform:scaleX(1.067)">•</span>
<span class="t" style="left:155.5px;top:11.8px;font-size:11px;color:#3d4458;-webkit-text-stroke:0.25px;transform:scaleX(0.901)">53335357</span>
<span class="t" style="left:858.7px;top:11.8px;font-size:11px;color:#6b7794;-webkit-text-stroke:0.25px;transform:scaleX(0.936)">Настройка аккаунта</span>
<span class="t" style="left:980.8px;top:11.8px;font-size:11px;color:#6b7794;-webkit-text-stroke:0.25px;transform:scaleX(0.915)">Помощь</span>
<span class="t" style="left:1141.5px;top:11.8px;font-size:11px;color:#1c1c1c;-webkit-text-stroke:0.25px;transform:scaleX(0.961)"><span style="color:#e1251b;-webkit-text-stroke:0.4px #e1251b">r</span>amil-urazgulov</span>
<span class="t" style="left:23.0px;top:57.3px;font-size:18px;transform:scaleX(0.967)">Поисковые системы</span>
<span class="t" style="left:208.5px;top:60.3px;font-size:10.5px;font-weight:700;color:#0b7d12;-webkit-text-stroke:0.2px;transform:scaleX(0.844)">Как использовать</span>
<span class="t" style="left:735.0px;top:59.8px;font-size:10.5px;color:#999;-webkit-text-stroke:0.25px;transform:scaleX(0.894)">Визиты за отчётный период: ≈ 1,48 млн</span>
<span class="t" style="left:1022.5px;top:59.8px;font-size:10.5px;color:#8a8a8a;-webkit-text-stroke:0.25px;transform:scaleX(0.904)">На дашборд</span>
<span class="t" style="left:1102.5px;top:59.8px;font-size:10.5px;-webkit-text-stroke:0.25px;transform:scaleX(0.895)">Сохранить как</span>
<span class="t" style="left:32.5px;top:92.3px;font-size:10.5px;-webkit-text-stroke:0.25px;transform:scaleX(0.889)">Сегодня</span>
<span class="t" style="left:86.5px;top:92.3px;font-size:10.5px;-webkit-text-stroke:0.25px;transform:scaleX(0.880)">Вчера</span>
<span class="t" style="left:131.5px;top:92.3px;font-size:10.5px;-webkit-text-stroke:0.25px;transform:scaleX(0.885)">Неделя</span>
<span class="t" style="left:182.5px;top:92.3px;font-size:10.5px;-webkit-text-stroke:0.25px;transform:scaleX(0.885)">Месяц</span>
<span class="t" style="left:228.3px;top:92.3px;font-size:10.5px;-webkit-text-stroke:0.25px;transform:scaleX(0.907)">Квартал</span>
<span class="t" style="left:282.6px;top:92.3px;font-size:10.5px;-webkit-text-stroke:0.25px;transform:scaleX(0.884)">Год</span>
<span class="t" style="left:344.6px;top:92.3px;font-size:10.5px;-webkit-text-stroke:0.25px;transform:scaleX(0.874)">1 янв 2023 — 29 мар 2025</span>
<span class="t" style="left:485.4px;top:92.3px;font-size:10.5px;-webkit-text-stroke:0.25px;transform:scaleX(0.897)">Детализация: по месяцам</span>
<span class="t" style="left:633.6px;top:92.3px;font-size:10.5px;-webkit-text-stroke:0.25px;transform:scaleX(0.910)">Данные: без роботов</span>
<span class="t" style="left:41.0px;top:128.7px;font-size:10.5px;-webkit-text-stroke:0.25px;transform:scaleX(0.892)">Сегмент: 1 условие</span>
<span class="t" style="left:191.3px;top:128.7px;font-size:10.5px;-webkit-text-stroke:0.25px;transform:scaleX(0.887)">Сравнить сегменты</span>
<span class="t" style="left:311.0px;top:128.7px;font-size:10.5px;-webkit-text-stroke:0.25px;transform:scaleX(0.894)">Выборка: 100%</span>
<span class="t" style="left:414.0px;top:128.7px;font-size:10.5px;-webkit-text-stroke:0.25px;transform:scaleX(0.895)">Атрибуция: Последний значимый переход</span>
<span class="t" style="left:23.0px;top:169.8px;font-size:10.5px;color:#999;-webkit-text-stroke:0.25px;transform:scaleX(0.886)">Визиты, в которых</span>
<span class="t" style="left:117.0px;top:169.8px;font-size:10.5px;-webkit-text-stroke:0.25px;transform:scaleX(0.892)">Поведение<span style="font-size:7px;vertical-align:1px"> • </span>Роботность: Только люди</span>
<span class="t" style="left:332.5px;top:169.8px;font-size:10.5px;color:#999;-webkit-text-stroke:0.25px;transform:scaleX(0.878)">для людей, у которых</span>
<span class="t" style="left:23.3px;top:210.3px;font-size:13px;-webkit-text-stroke:0.35px;transform:scaleX(0.992)">Визиты</span>
<span class="t" style="left:218.6px;top:211.7px;font-size:10.5px;-webkit-text-stroke:0.25px;transform:scaleX(0.897)">6/6</span>
<span class="t" style="left:853.3px;top:200.8px;font-size:40px;font-family:'Liberation Serif', serif;color:#e0261b;-webkit-text-stroke:0.3px;transform:scaleX(0.925)">Сезон</span>
<span class="t" style="left:1116.0px;top:209.8px;font-size:10.5px;-webkit-text-stroke:0.25px;transform:scaleX(0.886)">Скрыть график</span>
<span class="t" style="left:55.4px;top:495.4px;font-size:10.5px;-webkit-text-stroke:0.25px;transform:scaleX(0.753)">0</span>
<span class="t" style="left:33.5px;top:468.1px;font-size:10.5px;-webkit-text-stroke:0.25px;transform:scaleX(0.819)">25 000</span>
<span class="t" style="left:33.5px;top:440.6px;font-size:10.5px;-webkit-text-stroke:0.25px;transform:scaleX(0.819)">50 000</span>
<span class="t" style="left:33.5px;top:413.2px;font-size:10.5px;-webkit-text-stroke:0.25px;transform:scaleX(0.819)">75 000</span>
<span class="t" style="left:29.5px;top:385.9px;font-size:10.5px;-webkit-text-stroke:0.25px;transform:scaleX(0.798)">100 000</span>
<span class="t" style="left:29.5px;top:358.4px;font-size:10.5px;-webkit-text-stroke:0.25px;transform:scaleX(0.798)">125 000</span>
<span class="t" style="left:29.5px;top:331.1px;font-size:10.5px;-webkit-text-stroke:0.25px;transform:scaleX(0.798)">150 000</span>
<span class="t" style="left:29.5px;top:303.6px;font-size:10.5px;-webkit-text-stroke:0.25px;transform:scaleX(0.798)">175 000</span>
<span class="t" style="left:29.5px;top:276.2px;font-size:10.5px;-webkit-text-stroke:0.25px;transform:scaleX(0.798)">200 000</span>
<span class="t" style="left:29.5px;top:248.8px;font-size:10.5px;-webkit-text-stroke:0.25px;transform:scaleX(0.798)">225 000</span>
<span class="t" style="left:56.5px;top:505.9px;font-size:10.5px;-webkit-text-stroke:0.25px;transform:scaleX(0.849)">Янв 23</span>
<span class="t" style="left:136.1px;top:505.9px;font-size:10.5px;-webkit-text-stroke:0.25px;transform:scaleX(0.811)">Мар 23</span>
<span class="t" style="left:215.7px;top:505.9px;font-size:10.5px;-webkit-text-stroke:0.25px;transform:scaleX(0.810)">Май 23</span>
<span class="t" style="left:295.3px;top:505.9px;font-size:10.5px;-webkit-text-stroke:0.25px;transform:scaleX(0.793)">Июл 23</span>
<span class="t" style="left:374.9px;top:505.9px;font-size:10.5px;-webkit-text-stroke:0.25px;transform:scaleX(0.842)">Сен 23</span>
<span class="t" style="left:454.5px;top:505.9px;font-size:10.5px;-webkit-text-stroke:0.25px;transform:scaleX(0.845)">Ноя 23</span>
<span class="t" style="left:534.1px;top:505.9px;font-size:10.5px;-webkit-text-stroke:0.25px;transform:scaleX(0.849)">Янв 24</span>
<span class="t" style="left:613.8px;top:505.9px;font-size:10.5px;-webkit-text-stroke:0.25px;transform:scaleX(0.811)">Мар 24</span>
<span class="t" style="left:693.4px;top:505.9px;font-size:10.5px;-webkit-text-stroke:0.25px;transform:scaleX(0.810)">Май 24</span>
<span class="t" style="left:773.0px;top:505.9px;font-size:10.5px;-webkit-text-stroke:0.25px;transform:scaleX(0.793)">Июл 24</span>
<span class="t" style="left:852.6px;top:505.9px;font-size:10.5px;-webkit-text-stroke:0.25px;transform:scaleX(0.842)">Сен 24</span>
<span class="t" style="left:932.2px;top:505.9px;font-size:10.5px;-webkit-text-stroke:0.25px;transform:scaleX(0.845)">Ноя 24</span>
<span class="t" style="left:1011.8px;top:505.9px;font-size:10.5px;-webkit-text-stroke:0.25px;transform:scaleX(0.849)">Янв 25</span>
<span class="t" style="left:1091.4px;top:505.9px;font-size:10.5px;-webkit-text-stroke:0.25px;transform:scaleX(0.811)">Мар 25</span>
<span class="t" style="left:1166.3px;top:380.6px;font-size:10.5px;-webkit-text-stroke:0.25px;transform:scaleX(0.860)">Всего</span>
<span class="t" style="left:79.0px;top:566.8px;font-size:10.5px;-webkit-text-stroke:0.25px;transform:scaleX(0.890)">Группировки</span>
<span class="t" style="left:845.6px;top:566.4px;font-size:10.5px;-webkit-text-stroke:0.25px;transform:scaleX(0.871)">Метрики</span>
<span class="t" style="left:909.0px;top:566.4px;font-size:10.5px;-webkit-text-stroke:0.25px;transform:scaleX(0.884)">Выберите цель</span>
<span class="t" style="left:1075.7px;top:566.4px;font-size:10.5px;-webkit-text-stroke:0.25px;transform:scaleX(0.888)">Нет избранных целей</span>
<span class="t" style="left:39.5px;top:596.2px;font-size:10.5px;font-weight:700;-webkit-text-stroke:0.2px;transform:scaleX(0.867)">Поисковая система, Поисковая система (детально), Поисковая фраза</span>
<span class="t" style="left:852.0px;top:596.4px;font-size:10.5px;font-weight:700;-webkit-text-stroke:0.2px;transform:scaleX(0.869)">Визиты</span>
<span class="t" style="left:925.0px;top:596.4px;font-size:10.5px;font-weight:700;-webkit-text-stroke:0.2px;transform:scaleX(0.896)">Посетители</span>
<span class="t" style="left:1018.2px;top:596.4px;font-size:10.5px;font-weight:700;-webkit-text-stroke:0.2px;transform:scaleX(0.883)">Отказы</span>
<span class="t" style="left:1090.5px;top:596.4px;font-size:10.5px;font-weight:700;-webkit-text-stroke:0.2px;transform:scaleX(0.873)">Глубина</span>
<span class="t" style="left:1078.4px;top:608.8px;font-size:10.5px;font-weight:700;-webkit-text-stroke:0.2px;transform:scaleX(0.888)">просмотра</span>
<span class="t" style="left:1166.6px;top:596.4px;font-size:10.5px;font-weight:700;-webkit-text-stroke:0.2px;transform:scaleX(0.875)">Время</span>
<span class="t" style="left:1157.0px;top:608.8px;font-size:10.5px;font-weight:700;-webkit-text-stroke:0.2px;transform:scaleX(0.879)">на сайте</span>
<span class="t" style="left:58.0px;top:657.8px;font-size:10.5px;-webkit-text-stroke:0.25px;transform:scaleX(0.899)">Итого и средние</span>
<span class="t" style="left:73.0px;top:686.8px;font-size:10.5px;-webkit-text-stroke:0.25px;transform:scaleX(0.886)">Google</span>
<span class="t" style="left:73.0px;top:715.8px;font-size:10.5px;-webkit-text-stroke:0.25px;transform:scaleX(0.892)">Яндекс</span>
<span class="t" style="left:858.7px;top:657.4px;font-size:10.5px;color:#111;-webkit-text-stroke:0.25px;transform:scaleX(0.902)">1,46<span style="letter-spacing:-1.5px"> </span>млн</span>
<span class="t" style="left:957.0px;top:657.4px;font-size:10.5px;color:#111;-webkit-text-stroke:0.25px;transform:scaleX(0.895)">1,1<span style="letter-spacing:-1.5px"> </span>млн</span>
<span class="t" style="left:1034.0px;top:657.4px;font-size:10.5px;color:#111;-webkit-text-stroke:0.25px;transform:scaleX(0.865)">20,3<span style="letter-spacing:-1.5px"> </span>%</span>
<span class="t" style="left:1119.9px;top:657.4px;font-size:10.5px;color:#111;-webkit-text-stroke:0.25px;transform:scaleX(0.856)">1,54</span>
<span class="t" style="left:1188.8px;top:657.4px;font-size:10.5px;color:#111;-webkit-text-stroke:0.25px;transform:scaleX(0.802)">1:41</span>
<span class="t" style="left:862.3px;top:684.6px;font-size:10.5px;color:#111;-webkit-text-stroke:0.25px;transform:scaleX(0.915)">882<span style="letter-spacing:-1.5px"> </span>772</span>
<span class="t" style="left:956.0px;top:684.6px;font-size:10.5px;color:#111;-webkit-text-stroke:0.25px;transform:scaleX(0.891)">658<span style="letter-spacing:-1.5px"> </span>533</span>
<span class="t" style="left:1035.0px;top:684.6px;font-size:10.5px;color:#111;-webkit-text-stroke:0.25px;transform:scaleX(0.833)">18,8<span style="letter-spacing:-1.5px"> </span>%</span>
<span class="t" style="left:1119.9px;top:684.6px;font-size:10.5px;color:#111;-webkit-text-stroke:0.25px;transform:scaleX(0.856)">1,44</span>
<span class="t" style="left:1187.9px;top:684.6px;font-size:10.5px;color:#111;-webkit-text-stroke:0.25px;transform:scaleX(0.846)">1:40</span>
<span class="t" style="left:863.2px;top:713.4px;font-size:10.5px;color:#111;-webkit-text-stroke:0.25px;transform:scaleX(0.891)">573<span style="letter-spacing:-1.5px"> </span>183</span>
<span class="t" style="left:956.0px;top:713.4px;font-size:10.5px;color:#111;-webkit-text-stroke:0.25px;transform:scaleX(0.891)">435<span style="letter-spacing:-1.5px"> </span>194</span>
<span class="t" style="left:1034.0px;top:713.4px;font-size:10.5px;color:#111;-webkit-text-stroke:0.25px;transform:scaleX(0.865)">22,6<span style="letter-spacing:-1.5px"> </span>%</span>
<span class="t" style="left:1125.4px;top:713.4px;font-size:10.5px;color:#111;-webkit-text-stroke:0.25px;transform:scaleX(0.821)">1,7</span>
<span class="t" style="left:1188.8px;top:713.4px;font-size:10.5px;color:#111;-webkit-text-stroke:0.25px;transform:scaleX(0.802)">1:41</span>
</div>

</body>
</html>
